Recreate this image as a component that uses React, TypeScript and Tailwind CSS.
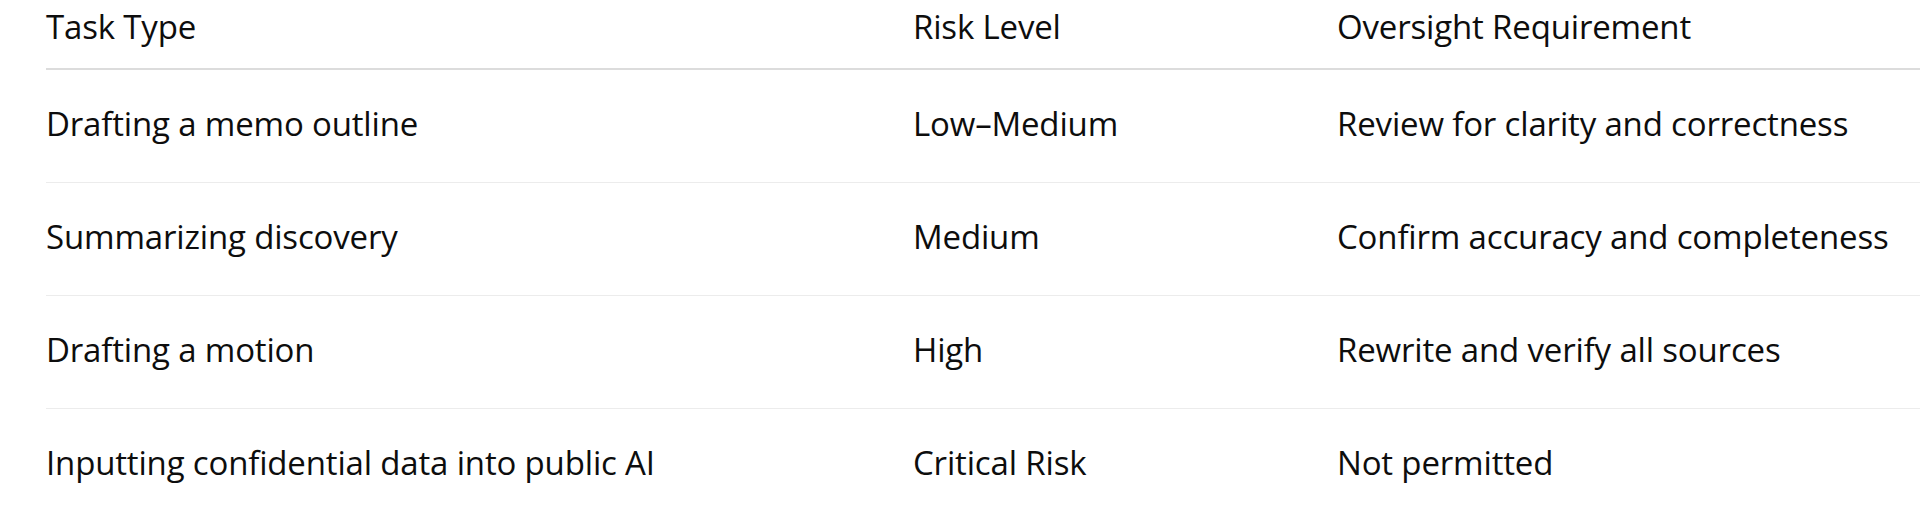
const rows = [
  { task: "Drafting a memo outline", risk: "Low–Medium", oversight: "Review for clarity and correctness" },
  { task: "Summarizing discovery", risk: "Medium", oversight: "Confirm accuracy and completeness" },
  { task: "Drafting a motion", risk: "High", oversight: "Rewrite and verify all sources" },
  { task: "Inputting confidential data into public AI", risk: "Critical Risk", oversight: "Not permitted" },
];

export default function App() {
  return (
    <div className="min-h-[526px] bg-white pl-[46px] text-[33px] leading-none text-[#0d0d0d] font-['Open_Sans',sans-serif] tracking-[-0.005em] overflow-hidden">
      {/* Header */}
      <div className="grid grid-cols-[867px_424px_1fr] h-[70px] items-center pb-[16px] border-b-2 border-[#dcdcdc]">
        <div>Task Type</div>
        <div>Risk Level</div>
        <div>Oversight Requirement</div>
      </div>

      {/* Rows */}
      {rows.map((row, i) => (
        <div
          key={i}
          className={
            "grid grid-cols-[867px_424px_1fr] h-[113px] items-center pb-[6px] " +
            (i < rows.length - 1 ? "border-b border-[#ececec]" : "")
          }
        >
          <div>{row.task}</div>
          <div>{row.risk}</div>
          <div>{row.oversight}</div>
        </div>
      ))}
    </div>
  );
}
